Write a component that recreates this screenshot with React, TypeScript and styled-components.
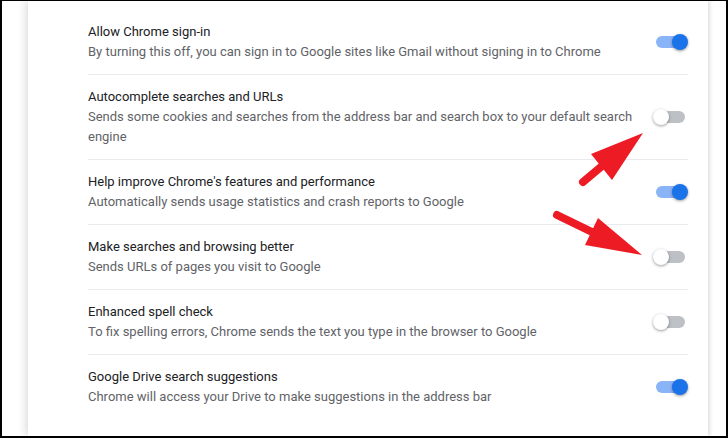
import styled, { createGlobalStyle } from 'styled-components';

const GlobalStyle = createGlobalStyle`
  html, body {
    margin: 0;
    padding: 0;
    background: #ffffff;
  }
  * {
    box-sizing: border-box;
  }
`;

const Page = styled.div`
  position: relative;
  width: 728px;
  height: 438px;
  overflow: hidden;
`;

const Frame = styled.div`
  display: flex;
  width: 100%;
  height: 100%;
  border-style: solid;
  border-color: #000;
  border-width: 1px 2px 2px 2px;
  padding: 0 18px 0 26px;
  background: #fff;
`;

const Card = styled.section`
  flex: 1;
  background: #fff;
  box-shadow: -3px 0 8px rgba(0, 0, 0, 0.12), 2px 0 4px rgba(0, 0, 0, 0.1);
  padding: 9px 20px 0 60px;
  font-family: Roboto, 'Liberation Sans', sans-serif;
  font-size: 13px;
  line-height: 20px;
`;

const Row = styled.div`
  display: flex;
  align-items: center;
  min-height: 64px;
  padding: 12px 0;
  & + & {
    border-top: 1px solid #e8eaed;
  }
`;

const Text = styled.div`
  flex: 1;
  padding-right: 20px;
`;

const Title = styled.div`
  color: #202124;
`;

const Sub = styled.div`
  color: #5f6368;
`;

const Toggle = styled.span<{ $on: boolean }>`
  position: relative;
  flex: none;
  width: 35px;
  height: 16px;

  &::before {
    content: '';
    position: absolute;
    left: 3px;
    top: 2px;
    width: 29px;
    height: 12px;
    border-radius: 6px;
    background: ${(p) => (p.$on ? '#8ab4f8' : '#bdc1c6')};
  }

  &::after {
    content: '';
    position: absolute;
    top: 0;
    left: ${(p) => (p.$on ? '19px' : '0')};
    width: 16px;
    height: 16px;
    border-radius: 50%;
    background: ${(p) => (p.$on ? '#1a73e8' : '#ffffff')};
    box-shadow: 0 1px 3px rgba(0, 0, 0, 0.4);
  }
`;

const Overlay = styled.svg`
  position: absolute;
  left: 0;
  top: 0;
  pointer-events: none;
`;

const settings = [
  {
    title: 'Allow Chrome sign-in',
    sub: 'By turning this off, you can sign in to Google sites like Gmail without signing in to Chrome',
    on: true,
  },
  {
    title: 'Autocomplete searches and URLs',
    sub: 'Sends some cookies and searches from the address bar and search box to your default search engine',
    on: false,
  },
  {
    title: "Help improve Chrome's features and performance",
    sub: 'Automatically sends usage statistics and crash reports to Google',
    on: true,
  },
  {
    title: 'Make searches and browsing better',
    sub: 'Sends URLs of pages you visit to Google',
    on: false,
  },
  {
    title: 'Enhanced spell check',
    sub: 'To fix spelling errors, Chrome sends the text you type in the browser to Google',
    on: false,
  },
  {
    title: 'Google Drive search suggestions',
    sub: 'Chrome will access your Drive to make suggestions in the address bar',
    on: true,
  },
];

const RED = '#ed1c24';

const App = () => {
  return (
    <Page>
      <GlobalStyle />
      <Frame>
        <Card>
          {settings.map((s) => (
            <Row key={s.title}>
              <Text>
                <Title>{s.title}</Title>
                <Sub>{s.sub}</Sub>
              </Text>
              <Toggle $on={s.on} />
            </Row>
          ))}
        </Card>
      </Frame>
      <Overlay width="728" height="438" viewBox="0 0 728 438">
        <line x1="583" y1="182" x2="602" y2="166" stroke={RED} strokeWidth="8" strokeLinecap="round" />
        <polygon points="643,133 591,154 612,180" fill={RED} />
        <line x1="557" y1="215" x2="592" y2="232" stroke={RED} strokeWidth="8" strokeLinecap="round" />
        <polygon points="642,255 598,218 585,245" fill={RED} />
      </Overlay>
    </Page>
  );
};

export default App;
